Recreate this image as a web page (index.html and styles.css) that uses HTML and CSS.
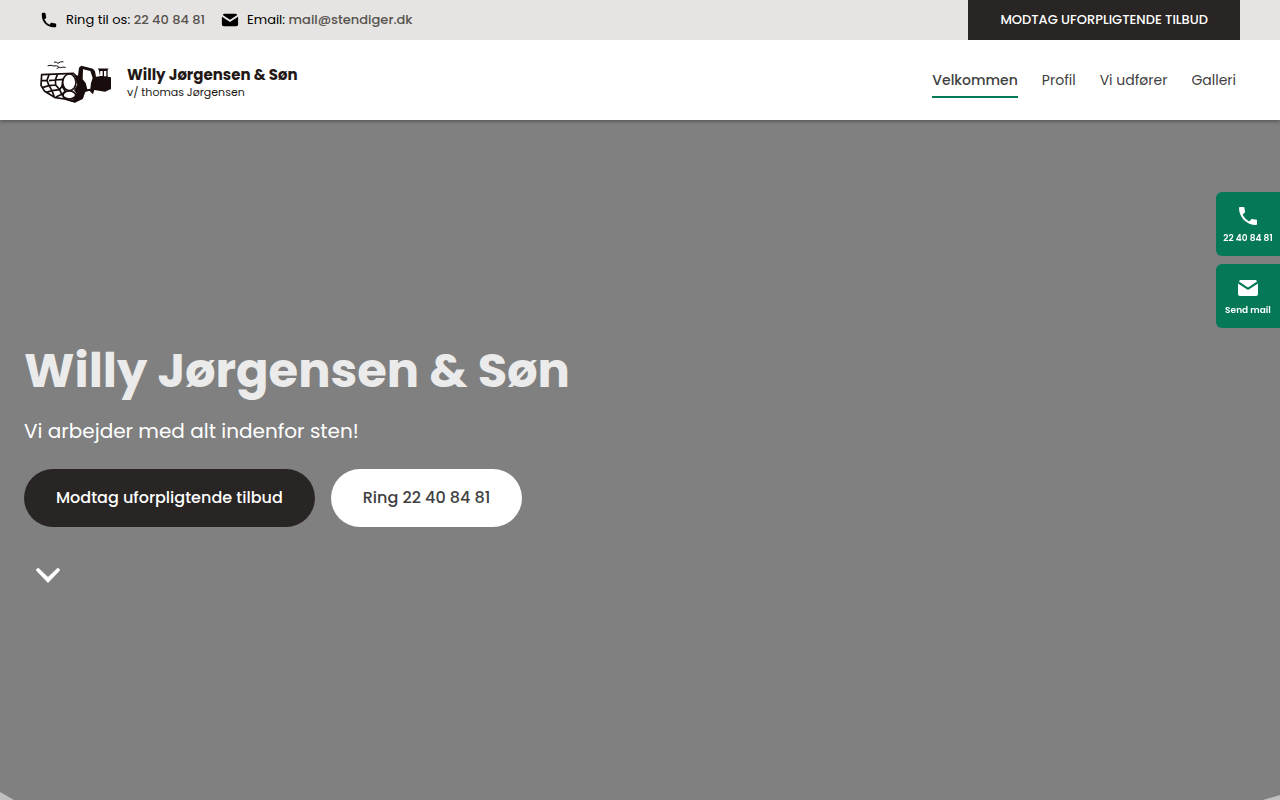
FILE: index.html
```html
<!DOCTYPE html>
<html lang="da">
<head>
  <meta charset="UTF-8">
  <meta name="viewport" content="width=device-width, initial-scale=1.0">
  <title>Willy Jørgensen &amp; Søn</title>
  <link rel="stylesheet" href="styles.css">
</head>
<body>
  <div class="topbar">
    <div class="topbar-contact">
      <a href="tel:22408481">
        <svg class="icon" viewBox="0 0 20 20"><path d="M2 3a1 1 0 0 1 1-1h2.150a1 1 0 0 1 .99.840l.74 4.430a1 1 0 0 1-.54 1.060l-1.550.77a11 11 0 0 0 6.110 6.110l.77-1.550a1 1 0 0 1 1.060-.54l4.430.74a1 1 0 0 1 .84.99V17a1 1 0 0 1-1 1h-2C7.820 18 2 12.180 2 5z"/></svg>
        <span>Ring til os: <b>22 40 84 81</b></span>
      </a>
      <a href="mailto:mail@stendiger.dk">
        <svg class="icon" viewBox="0 0 20 20"><path d="M2 4.500a2 2 0 0 1 1.500-1.500h13a2 2 0 0 1 1.500 1.500l-8 5.200z"/><path d="M1 6.500l9 5.800 9-5.800V15a2 2 0 0 1-2 2H3a2 2 0 0 1-2-2z"/></svg>
        <span>Email: <b>mail@stendiger.dk</b></span>
      </a>
    </div>
    <a class="topbar-offer" href="#tilbud">MODTAG UFORPLIGTENDE TILBUD</a>
  </div>

  <header class="header">
    <a class="logo" href="#">
      <svg class="logo-picture" viewBox="30 27 219 135">
        <g fill="none" stroke="#180c0c" stroke-width="3" stroke-linecap="round">
          <path d="M54 47q10-3 17 1q8-2 14 1M73 36q8 0 11 4q6-6 15-5M81 55q8-5 11-2q6-3 14-1"/>
        </g>
        <!-- stones -->
        <g fill="#fff" stroke="#180c0c" stroke-width="5" stroke-linejoin="round">
          <path d="M35 74L130 70L150 90L158 140L133 155L104 147L76 143L44 124L33 106z"/>
          <path fill="none" d="M57 74L51 91L33 92M51 91L57 107L36 113M57 92L76 90M82 74L76 90L77 105L57 107L66 122L49 127M76 90L99 88M77 105L89 119L66 122L73 141M99 88L96 108L89 119L95 133L78 141M95 133L106 124L96 108M95 133L105 146"/>
          <ellipse cx="118" cy="97" rx="20" ry="25"/>
          <ellipse cx="118" cy="135" rx="19" ry="12"/>
        </g>
        <!-- loader -->
        <path fill="#180c0c" fill-rule="evenodd" d="M134 74L144 77L147 53L154 47L189 56L195 64L198 80L210 79L206 57L233 57L233 80L243 82L243 117L225 125L193 120L189 133L178 122L166 126L158 147L135 158L108 149L130 148L139 130L132 120L142 104z
          M159 58L181 63L188 84L183 99L181 116L172 118L167 99L158 88z
          M211 63h7v15h-8zM222 63h7v16h-7z"/>
        <path d="M204 57h31" stroke="#180c0c" stroke-width="3"/>
      </svg>
      <span class="logo-text">
        <strong>Willy Jørgensen &amp; Søn</strong>
        <span>v/ thomas Jørgensen</span>
      </span>
    </a>
    <nav class="nav">
      <a class="active" href="#">Velkommen</a>
      <a href="#profil">Profil</a>
      <a href="#udforer">Vi udfører</a>
      <a href="#galleri">Galleri</a>
    </nav>
  </header>

  <main class="hero">
    <h1>Willy Jørgensen &amp; Søn</h1>
    <p>Vi arbejder med alt indenfor sten!</p>
    <div class="hero-buttons">
      <a class="btn btn-dark" href="#tilbud">Modtag uforpligtende tilbud</a>
      <a class="btn btn-light" href="tel:22408481">Ring 22 40 84 81</a>
    </div>
    <a class="scroll-down" href="#profil" aria-label="Rul ned">
      <svg viewBox="0 0 48 48"><path d="M12.300 19.700a1.500 1.500 0 0 1 0-1.400l1.200-1.100a1.500 1.500 0 0 1 1.600.2L24 25.900l8.900-8.500a1.500 1.500 0 0 1 1.600-.2l1.200 1.100a1.500 1.500 0 0 1 0 1.400L24 32z"/></svg>
    </a>
    <div class="corner corner-left"></div>
    <div class="corner corner-right"></div>
  </main>

  <aside class="side">
    <a href="tel:22408481">
      <svg viewBox="0 0 24 24"><path d="M3 4a1 1 0 0 1 1-1h3.500a1 1 0 0 1 1 1c0 1.300.2 2.500.6 3.600a1 1 0 0 1-.3 1L6.600 10.800a15 15 0 0 0 6.600 6.600l2.200-2.200a1 1 0 0 1 1-.3c1.100.4 2.300.6 3.600.6a1 1 0 0 1 1 1V20a1 1 0 0 1-1 1C10.600 21 3 13.400 3 4z"/></svg>
      <span>22 40 84 81</span>
    </a>
    <a href="mailto:mail@stendiger.dk">
      <svg viewBox="0 0 24 24"><path d="M3 5.400a2 2 0 0 1 1.500-1.400h15a2 2 0 0 1 1.500 1.400l-9 6z"/><path d="M2 7.400l10 6.600 10-6.600V18a2 2 0 0 1-2 2H4a2 2 0 0 1-2-2z"/></svg>
      <span>Send mail</span>
    </a>
  </aside>
</body>
</html>
```
FILE: styles.css
```css
* {
  box-sizing: border-box;
}
body {
  margin: 0;
  min-height: 100vh;
  display: flex;
  flex-direction: column;
  font-family: Poppins, Inter, sans-serif;
  color: #404040;
}
a {
  color: inherit;
  text-decoration: none;
}
svg {
  fill: currentColor;
}

.topbar {
  position: relative;
  z-index: 2;
  height: 40px;
  padding: 0 40px;
  display: flex;
  justify-content: space-between;
  background-color: #e5e4e2;
  font-size: 13px;
}
.topbar-contact {
  display: flex;
  gap: 16px;
  color: #000;
}
.topbar-contact a {
  display: flex;
  align-items: center;
  gap: 8px;
}
.topbar-contact b {
  font-weight: 500;
  color: #57534e;
}
.icon {
  width: 18px;
  height: 18px;
}
.topbar-offer {
  display: flex;
  align-items: center;
  padding: 0 32px;
  background-color: #292524;
  color: #fff;
  font-weight: 500;
}

.header {
  position: relative;
  z-index: 1;
  height: 80px;
  padding: 0 40px;
  display: flex;
  align-items: center;
  justify-content: space-between;
  background-color: #fff;
  box-shadow: 0 1px 4px rgba(0,0,0,0.4);
}
.logo {
  display: flex;
  align-items: center;
  gap: 14px;
  padding-top: 3px;
  color: #231815;
}
.logo-picture {
  width: 73px;
  height: 45px;
}
.logo-text {
  display: flex;
  flex-direction: column;
  font-size: 11px;
  line-height: 14px;
}
.logo-text strong {
  font-size: 15px;
  line-height: 20px;
}
.nav {
  display: flex;
  gap: 24px;
  padding-right: 4px;
  font-size: 14px;
  line-height: 32px;
}
.nav a {
  border-bottom: 2px solid transparent;
  border-top: 2px solid transparent;
}
.nav .active {
  font-weight: 500;
  border-bottom-color: #047857;
}

.hero {
  position: relative;
  flex: 1;
  display: flex;
  flex-direction: column;
  justify-content: center;
  align-items: flex-start;
  padding: 20px 24px 0;
  background-color: #808080;
  color: #fff;
  overflow: hidden;
}
.hero h1 {
  margin: 0 0 16px;
  font-size: 48px;
  line-height: 60px;
  color: #ebebeb;
}
.hero p {
  margin: 0 0 24px;
  font-size: 20px;
  line-height: 28px;
}
.hero-buttons {
  display: flex;
  gap: 16px;
  margin-bottom: 24px;
}
.btn {
  padding: 16px 32px;
  border-radius: 29px;
  font-size: 16px;
  font-weight: 500;
  line-height: 26px;
}
.btn-dark {
  background-color: #292524;
}
.btn-light {
  background-color: #fff;
  color: #404040;
}
.scroll-down, .scroll-down svg {
  display: block;
  width: 48px;
  height: 48px;
}

/* edges of the curve under the hero */
.corner {
  position: absolute;
  bottom: 0;
  background-color: #c0c0c0;
}
.corner-left {
  left: 0;
  width: 14px;
  height: 8px;
  clip-path: polygon(0 0, 100% 100%, 0 100%);
}
.corner-right {
  right: 0;
  width: 17px;
  height: 5px;
  clip-path: polygon(100% 0, 100% 100%, 0 100%);
}

.side {
  position: fixed;
  z-index: 3;
  top: 192px;
  right: 0;
  display: flex;
  flex-direction: column;
  gap: 8px;
}
.side a {
  width: 64px;
  height: 64px;
  display: flex;
  flex-direction: column;
  align-items: center;
  justify-content: center;
  gap: 4px;
  border-radius: 6px 0 0 6px;
  background-color: #047857;
  color: #fff;
  font-size: 9px;
  font-weight: 600;
  line-height: 12px;
}
.side svg {
  width: 24px;
  height: 24px;
}
```
